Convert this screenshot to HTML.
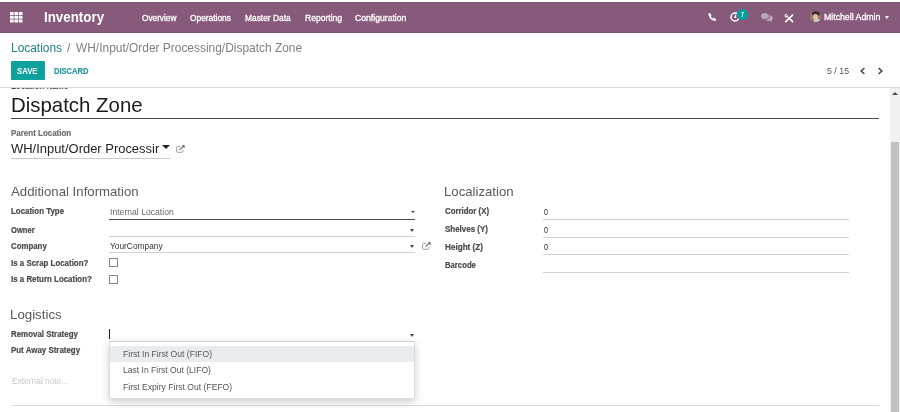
<!DOCTYPE html>
<html lang="en"><head><meta charset="utf-8"><title>Locations - Dispatch Zone</title>
<style>
*{box-sizing:border-box;margin:0;padding:0}
html,body{width:900px;height:412px;overflow:hidden;background:#fff;font-family:"Liberation Sans",sans-serif}
.a{position:absolute}
.t{position:absolute;white-space:nowrap;line-height:1;transform-origin:0 0}
.ln{position:absolute;height:1px;background:#d2d2d2}
.cb{position:absolute;width:9px;height:9px;border:1px solid #858585;border-radius:.5px;background:#fff}
.car{position:absolute;width:0;height:0;border-style:solid;border-color:#444 transparent transparent transparent}
svg{position:absolute;overflow:visible}
</style></head><body>
<div class="a" id="navbar" style="left:0;top:2px;width:900px;height:30.700px;background:#875a7b;border-top:1px solid #7d5372;border-bottom:1px solid #7a5170"></div>
<!-- apps grid icon -->
<svg style="left:10.2px;top:11.6px" width="12.5" height="10.4" viewBox="0 0 12.5 10.4"><g fill="#fff"><rect x="0" y="0" width="3.7" height="3" rx=".3"/><rect x="4.4" y="0" width="3.7" height="3" rx=".3"/><rect x="8.8" y="0" width="3.7" height="3" rx=".3"/><rect x="0" y="3.7" width="3.7" height="3" rx=".3"/><rect x="4.4" y="3.7" width="3.7" height="3" rx=".3"/><rect x="8.8" y="3.7" width="3.7" height="3" rx=".3"/><rect x="0" y="7.4" width="3.7" height="3" rx=".3"/><rect x="4.4" y="7.4" width="3.7" height="3" rx=".3"/><rect x="8.8" y="7.4" width="3.7" height="3" rx=".3"/></g></svg>
<!-- phone -->
<svg style="left:707.6px;top:13px" width="8.500" height="8.500" viewBox="0 0 8.500 8.500"><g stroke="#fff" fill="none" stroke-linecap="round"><path d="M1.700 1.700C1.700 4.700 3.900 6.900 6.800 6.800" stroke-width="1.500"/><path d="M1.500 1.300L2.300 2.700" stroke-width="2.300"/><path d="M5.700 5.900L7 6.700" stroke-width="2.300"/></g></svg>
<!-- clock (activities) -->
<svg style="left:729.7px;top:11.5px" width="10" height="10" viewBox="0 0 10 10"><circle cx="5" cy="5" r="4" fill="none" stroke="#fff" stroke-width="1.500"/><path d="M5.600 2.600V5.400H4" fill="none" stroke="#fff" stroke-width="1.200"/></svg>
<div class="a" style="left:737.2px;top:9.100px;width:10.800px;height:10.800px;border-radius:50%;background:#00a09d"></div>
<!-- chat bubbles -->
<svg style="left:761.2px;top:12.800px;opacity:.45" width="12" height="9" viewBox="0 0 24 18"><path fill="#fff" d="M8 0C3.600 0 0 2.700 0 6c0 1.900 1.200 3.600 3 4.700-.2 1-.8 2-1.600 2.800 1.700-.1 3.300-.8 4.500-1.800.7.200 1.400.3 2.100.3 4.400 0 8-2.700 8-6S12.400 0 8 0z"/><path fill="#fff" d="M17.800 6.500c0 3.700-3.800 6.800-8.600 7.100 1.500 1.500 3.900 2.400 6.600 2.400.7 0 1.400-.1 2.100-.2 1.200 1 2.800 1.700 4.500 1.800-.8-.8-1.400-1.800-1.600-2.800 1.800-1.100 3-2.800 3-4.700 0-2.700-2.500-5-5.900-5.700-.1.700-.1 1.400-.1 2.100z"/></svg>
<!-- wrench x -->
<svg style="left:784px;top:13px" width="10" height="10" viewBox="0 0 10 10"><g stroke="#fff" stroke-linecap="round" fill="none"><path d="M1.700 8.600L8.500 2.200" stroke-width="1.700"/><path d="M4.100 4.500L6 6.200" stroke-width="1.100"/><path d="M6 6.200L8.600 8.600" stroke-width="1.700"/><path d="M3.600 2.800A1.200 1.200 0 1 1 2.500 1.500" stroke-width="1.200"/></g></svg>
<!-- avatar -->
<div class="a" style="left:810.1px;top:10.900px;width:11.300px;height:11.300px;border-radius:50%;overflow:hidden;background:#9c7d62">
 <div class="a" style="left:2.300px;top:.400px;width:7.400px;height:5px;border-radius:50%;background:#3e2e32"></div>
 <div class="a" style="left:3px;top:2.800px;width:5.200px;height:6.600px;border-radius:50%;background:#dcbdb0"></div>
 <div class="a" style="left:4.200px;top:8.600px;width:6.500px;height:4px;border-radius:50%;background:#c6c8d0"></div>
</div>
<div class="car" style="left:885px;top:15.800px;border-width:3px 2.700px 0 2.700px;border-top-color:#fff"></div>

<!-- control panel -->
<div class="a" style="left:10.600px;top:60.800px;width:34.200px;height:18.900px;background:#0fa19d;border-radius:1px"></div>
<svg style="left:859px;top:66.500px" width="7" height="8" viewBox="0 0 7 8"><path d="M5.400 1L2.200 4l3.200 3" fill="none" stroke="#4c4c4c" stroke-width="1.700"/></svg>
<svg style="left:876.500px;top:66.500px" width="7" height="8" viewBox="0 0 7 8"><path d="M1.600 1l3.200 3-3.200 3" fill="none" stroke="#4c4c4c" stroke-width="1.700"/></svg>
<div class="ln" style="left:0;top:86.600px;width:900px;background:#d8d8d8"></div>

<!-- scrollbar -->
<div class="a" style="left:890px;top:87.600px;width:10px;height:325px;background:#f1f1f1"></div>
<div class="a" style="left:891px;top:141.700px;width:8px;height:271px;background:#c1c1c1"></div>
<div class="a" style="left:892px;top:91.700px;width:0;height:0;border-style:solid;border-width:0 3px 3.300px 3px;border-color:transparent transparent #505050 transparent"></div>

<!-- clipped label above title -->
<div class="a" style="left:0;top:87.600px;width:200px;height:4px;overflow:hidden"><div class="t" style="left:10.800px;top:-5.200px;font-size:8.570px;font-weight:bold;color:#444;transform:scaleX(.93)">Location Name</div></div>

<!-- title underline -->
<div class="ln" style="left:11px;top:118px;width:868px;height:1.400px;background:#4a4a4a"></div>
<!-- parent location -->
<div class="ln" style="left:11px;top:157.800px;width:159px;background:#c9c9c9"></div>
<div class="car" style="left:162px;top:145.100px;border-width:4px 4px 0 4px;border-top-color:#222"></div>
<svg style="left:176px;top:145px" width="9.500" height="8" viewBox="0 0 9.500 8"><path d="M6.800 4.700V6.300a1 1 0 0 1-1 1H1.600a1 1 0 0 1-1-1V2.400a1 1 0 0 1 1-1H4.300" fill="none" stroke="#9c9ca4" stroke-width="1"/><path d="M3.600 4.600L8 .6" stroke="#666" stroke-width="1.100" fill="none"/><path d="M5.600.2H8.600V3.200z" fill="#666"/></svg>

<!-- left group lines -->
<div class="ln" style="left:109.400px;top:218.900px;width:305.500px;background:#4a4a4a"></div>
<div class="ln" style="left:109.400px;top:235.900px;width:305.500px"></div>
<div class="ln" style="left:109.400px;top:252.200px;width:305.500px"></div>
<div class="car" style="left:410.700px;top:210.700px;border-width:2.200px 2px 0 2px"></div>
<div class="car" style="left:409.500px;top:229.200px;border-width:3px 2.700px 0 2.700px"></div>
<div class="car" style="left:409.500px;top:245.200px;border-width:3px 2.700px 0 2.700px"></div>
<svg style="left:422px;top:241.600px" width="9.500" height="8" viewBox="0 0 9.500 8"><path d="M6.800 4.700V6.300a1 1 0 0 1-1 1H1.600a1 1 0 0 1-1-1V2.400a1 1 0 0 1 1-1H4.300" fill="none" stroke="#9c9ca4" stroke-width="1"/><path d="M3.600 4.600L8 .6" stroke="#666" stroke-width="1.100" fill="none"/><path d="M5.600.2H8.600V3.200z" fill="#666"/></svg>
<div class="cb" style="left:109px;top:258.300px"></div>
<div class="cb" style="left:109px;top:275px"></div>

<!-- right group lines -->
<div class="ln" style="left:543px;top:218.900px;width:305.500px"></div>
<div class="ln" style="left:543px;top:236.600px;width:305.500px"></div>
<div class="ln" style="left:543px;top:254.200px;width:305.500px"></div>
<div class="ln" style="left:543px;top:271.600px;width:305.500px"></div>

<!-- logistics -->
<div class="a" style="left:109px;top:329.300px;width:1px;height:10px;background:#222"></div>
<div class="car" style="left:409.500px;top:333.900px;border-width:3px 2.700px 0 2.700px"></div>
<div class="ln" style="left:10.600px;top:404.600px;width:868.400px;background:#dcdcdc"></div>

<div id="txt" style="position:absolute;left:0;top:0;width:900px;height:412px;will-change:transform"><div class="t" style="left:44.00px;top:10px;font-size:14.5px;font-weight:bold;color:#fff;transform:scaleX(0.9202)">Inventory</div>
<div class="t" style="left:142.00px;top:14px;font-size:9.2px;font-weight:normal;color:#fff;transform:scaleX(0.8977);-webkit-text-stroke:.3px #fff">Overview</div>
<div class="t" style="left:190.00px;top:14px;font-size:9.2px;font-weight:normal;color:#fff;transform:scaleX(0.9107);-webkit-text-stroke:.3px #fff">Operations</div>
<div class="t" style="left:244.70px;top:14px;font-size:9.2px;font-weight:normal;color:#fff;transform:scaleX(0.9131);-webkit-text-stroke:.3px #fff">Master Data</div>
<div class="t" style="left:304.70px;top:14px;font-size:9.2px;font-weight:normal;color:#fff;transform:scaleX(0.9314);-webkit-text-stroke:.3px #fff">Reporting</div>
<div class="t" style="left:354.70px;top:14px;font-size:9.2px;font-weight:normal;color:#fff;transform:scaleX(0.9406);-webkit-text-stroke:.3px #fff">Configuration</div>
<div class="t" style="left:823.50px;top:13px;font-size:9.2px;font-weight:normal;color:#fff;transform:scaleX(0.9509);-webkit-text-stroke:.3px #fff">Mitchell Admin</div>
<div class="t" style="left:741.10px;top:12px;font-size:6.4px;font-weight:bold;color:#fff;transform:scaleX(0.8000)">7</div>
<div class="t" style="left:11.00px;top:42px;font-size:12.0px;font-weight:normal;color:#1f8288;transform:scaleX(0.9928)">Locations</div>
<div class="t" style="left:67.10px;top:42px;font-size:12.0px;font-weight:normal;color:#808080;transform:scaleX(1.0500)">/</div>
<div class="t" style="left:76.00px;top:42px;font-size:12.0px;font-weight:normal;color:#808080;transform:scaleX(0.9941)">WH/Input/Order Processing/Dispatch Zone</div>
<div class="t" style="left:17.20px;top:67px;font-size:8.4px;font-weight:bold;color:#fff;transform:scaleX(0.9249)">SAVE</div>
<div class="t" style="left:53.90px;top:67px;font-size:8.4px;font-weight:bold;color:#2a9a9c;transform:scaleX(0.9028);-webkit-text-stroke:.2px">DISCARD</div>
<div class="t" style="left:826.60px;top:67px;font-size:8.6px;font-weight:normal;color:#555;transform:scaleX(1.0266)">5 / 15</div>
<div class="t" style="left:10.69px;top:95px;font-size:20.3px;font-weight:normal;color:#1a1a1a;transform:scaleX(1.0063)">Dispatch Zone</div>
<div class="t" style="left:11.20px;top:129px;font-size:8.57px;font-weight:bold;color:#707070;transform:scaleX(0.9306);-webkit-text-stroke:.2px">Parent Location</div>
<div class="t" style="left:11.20px;top:142px;font-size:13.2px;font-weight:normal;color:#222;transform:scaleX(0.9817)">WH/Input/Order Processir</div>
<div class="t" style="left:11.00px;top:185px;font-size:13.2px;font-weight:normal;color:#5a5a5a;transform:scaleX(1.0006)">Additional Information</div>
<div class="t" style="left:444.10px;top:185px;font-size:13.2px;font-weight:normal;color:#5a5a5a;transform:scaleX(0.9998)">Localization</div>
<div class="t" style="left:10.09px;top:308px;font-size:13.2px;font-weight:normal;color:#5a5a5a;transform:scaleX(1.0076)">Logistics</div>
<div class="t" style="left:10.80px;top:207px;font-size:8.57px;font-weight:bold;color:#4a4a4a;transform:scaleX(0.9247);-webkit-text-stroke:.2px">Location Type</div>
<div class="t" style="left:10.80px;top:226px;font-size:8.57px;font-weight:bold;color:#4a4a4a;transform:scaleX(0.8860);-webkit-text-stroke:.2px">Owner</div>
<div class="t" style="left:10.60px;top:242px;font-size:8.57px;font-weight:bold;color:#4a4a4a;transform:scaleX(0.9172);-webkit-text-stroke:.2px">Company</div>
<div class="t" style="left:10.80px;top:259px;font-size:8.57px;font-weight:bold;color:#4a4a4a;transform:scaleX(0.9232);-webkit-text-stroke:.2px">Is a Scrap Location?</div>
<div class="t" style="left:10.80px;top:275px;font-size:8.57px;font-weight:bold;color:#4a4a4a;transform:scaleX(0.9232);-webkit-text-stroke:.2px">Is a Return Location?</div>
<div class="t" style="left:110.10px;top:208px;font-size:8.57px;font-weight:normal;color:#6a6a6a;transform:scaleX(1.0071)">Internal Location</div>
<div class="t" style="left:109.70px;top:242px;font-size:8.57px;font-weight:normal;color:#333;transform:scaleX(0.9750)">YourCompany</div>
<div class="t" style="left:445.10px;top:207px;font-size:8.57px;font-weight:bold;color:#4a4a4a;transform:scaleX(0.9172);-webkit-text-stroke:.2px">Corridor (X)</div>
<div class="t" style="left:444.90px;top:225px;font-size:8.57px;font-weight:bold;color:#4a4a4a;transform:scaleX(0.9307);-webkit-text-stroke:.2px">Shelves (Y)</div>
<div class="t" style="left:444.90px;top:243px;font-size:8.57px;font-weight:bold;color:#4a4a4a;transform:scaleX(0.9502);-webkit-text-stroke:.2px">Height (Z)</div>
<div class="t" style="left:444.90px;top:261px;font-size:8.57px;font-weight:bold;color:#4a4a4a;transform:scaleX(0.9014);-webkit-text-stroke:.2px">Barcode</div>
<div class="t" style="left:543.70px;top:208px;font-size:8.57px;font-weight:normal;color:#222;transform:scaleX(0.8200)">0</div>
<div class="t" style="left:543.70px;top:226px;font-size:8.57px;font-weight:normal;color:#222;transform:scaleX(0.8200)">0</div>
<div class="t" style="left:543.70px;top:243px;font-size:8.57px;font-weight:normal;color:#222;transform:scaleX(0.8200)">0</div>
<div class="t" style="left:11.10px;top:330px;font-size:8.57px;font-weight:bold;color:#4a4a4a;transform:scaleX(0.9246);-webkit-text-stroke:.2px">Removal Strategy</div>
<div class="t" style="left:11.10px;top:346px;font-size:8.57px;font-weight:bold;color:#4a4a4a;transform:scaleX(0.9247);-webkit-text-stroke:.2px">Put Away Strategy</div>
<div class="t" style="left:11.90px;top:377px;font-size:8.57px;font-weight:normal;color:#c8c8c8;transform:scaleX(0.9788)">External note...</div></div>

<!-- autocomplete dropdown -->
<div class="a" style="left:109.200px;top:341px;width:305.700px;height:57.600px;background:#fff;border:1px solid #dcdcdc;border-top-color:#cfcfcf;box-shadow:0 3px 8px rgba(0,0,0,.2)"></div>
<div class="a" style="left:110.200px;top:345.500px;width:303.700px;height:16.200px;background:#e9ecef"></div>
<div id="ddtxt" style="position:absolute;left:0;top:0;width:900px;height:412px;will-change:transform"><div class="t" style="left:123.20px;top:350px;font-size:8.57px;font-weight:normal;color:#555;transform:scaleX(1.0012)">First In First Out (FIFO)</div>
<div class="t" style="left:123.20px;top:366px;font-size:8.57px;font-weight:normal;color:#555;transform:scaleX(0.9992)">Last In First Out (LIFO)</div>
<div class="t" style="left:123.20px;top:383px;font-size:8.57px;font-weight:normal;color:#555;transform:scaleX(1.0020)">First Expiry First Out (FEFO)</div></div>

</body></html>
